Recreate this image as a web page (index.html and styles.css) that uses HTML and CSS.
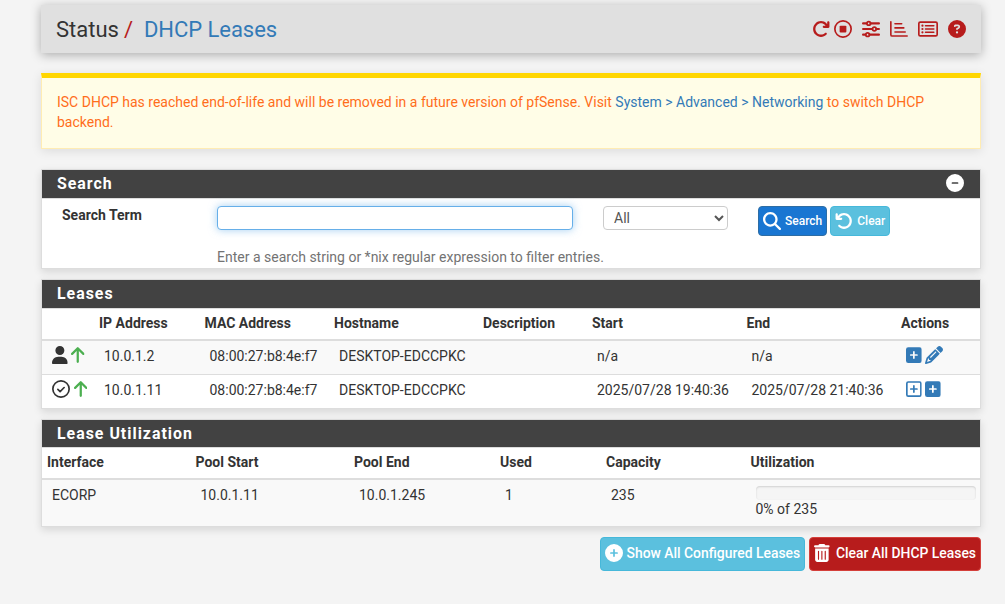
FILE: index.html
```html
<!DOCTYPE html>
<html lang="en">
<head>
<meta charset="utf-8">
<title>Status: DHCP Leases</title>
<link rel="stylesheet" href="styles.css">
</head>
<body>
<svg class="defs" aria-hidden="true">
  <symbol id="redo" viewBox="0 0 512 512"><path d="M386.3 160L336 160c-17.7 0-32 14.3-32 32s14.3 32 32 32l128 0c17.7 0 32-14.3 32-32l0-128c0-17.7-14.3-32-32-32s-32 14.3-32 32l0 51.2L414.4 97.6c-87.5-87.5-229.3-87.5-316.8 0s-87.5 229.3 0 316.8s229.3 87.5 316.8 0c12.5-12.5 12.5-32.8 0-45.3s-32.8-12.5-45.3 0c-62.5 62.5-163.8 62.5-226.3 0s-62.5-163.8 0-226.3s163.8-62.5 226.3 0L386.3 160z"/></symbol>
  <symbol id="stop" viewBox="0 0 512 512"><circle cx="256" cy="256" r="232" fill="none" stroke="currentColor" stroke-width="48"/><rect x="160" y="160" width="192" height="192" rx="28"/></symbol>
  <symbol id="sliders" viewBox="0 0 512 512"><g fill="none" stroke="currentColor" stroke-width="60" stroke-linecap="round"><path d="M30 96h100M242 96h240M30 256h260M402 256h80M30 416h70M212 416h270"/><g stroke-width="48"><circle cx="192" cy="96" r="52"/><circle cx="352" cy="256" r="52"/><circle cx="160" cy="416" r="52"/></g></g></symbol>
  <symbol id="chart" viewBox="0 0 512 512"><path d="M24 50v366q0 40 40 40h424M142 106h190M142 224h250M142 342h290" fill="none" stroke="currentColor" stroke-width="46" stroke-linecap="round" stroke-linejoin="round"/></symbol>
  <symbol id="list" viewBox="0 0 576 512"><rect x="24" y="56" width="528" height="400" rx="42" fill="none" stroke="currentColor" stroke-width="48"/><path d="M216 160h240M216 256h240M216 352h240" stroke="currentColor" stroke-width="44" stroke-linecap="round"/><circle cx="128" cy="160" r="32"/><circle cx="128" cy="256" r="32"/><circle cx="128" cy="352" r="32"/></symbol>
  <symbol id="help" viewBox="0 0 512 512"><path d="M256 512A256 256 0 1 0 256 0a256 256 0 1 0 0 512zM169.800 165.300c7.900-22.300 29.100-37.300 52.800-37.300l58.300 0c34.900 0 63.100 28.300 63.100 63.100c0 22.600-12.100 43.500-31.700 54.800L280 264.400c-.2 13-10.900 23.600-24 23.600c-13.300 0-24-10.700-24-24l0-13.500c0-8.600 4.600-16.500 12.100-20.800l44.300-25.400c4.700-2.700 7.600-7.700 7.600-13.100c0-8.400-6.800-15.100-15.100-15.100l-58.300 0c-3.400 0-6.400 2.100-7.500 5.300l-.4 1.200c-4.400 12.500-18.200 19-30.700 14.600s-19-18.200-14.600-30.700l.4-1.200zM224 352a32 32 0 1 1 64 0 32 32 0 1 1 -64 0z"/></symbol>
  <symbol id="minus" viewBox="0 0 512 512"><path fill-rule="evenodd" d="M256 512A256 256 0 1 0 256 0a256 256 0 1 0 0 512zM184 232h144a24 24 0 0 1 0 48H184a24 24 0 0 1 0-48z"/></symbol>
  <symbol id="plus-circle" viewBox="0 0 512 512"><path fill-rule="evenodd" d="M256 512A256 256 0 1 0 256 0a256 256 0 1 0 0 512zM232 344v-64h-64a24 24 0 0 1 0-48h64v-64a24 24 0 0 1 48 0v64h64a24 24 0 0 1 0 48h-64v64a24 24 0 0 1-48 0z"/></symbol>
  <symbol id="search" viewBox="0 0 512 512"><path d="M416 208c0 45.900-14.900 88.300-40 122.700L502.600 457.400c12.500 12.500 12.500 32.800 0 45.300s-32.800 12.500-45.300 0L330.700 376c-34.400 25.200-76.800 40-122.700 40C93.100 416 0 322.900 0 208S93.100 0 208 0S416 93.100 416 208zM208 352a144 144 0 1 0 0-288 144 144 0 1 0 0 288z"/></symbol>
  <symbol id="undo" viewBox="0 0 512 512"><path d="M125.700 160l50.300 0c17.700 0 32 14.300 32 32s-14.300 32-32 32L48 224c-17.700 0-32-14.300-32-32L16 64c0-17.700 14.300-32 32-32s32 14.300 32 32l0 51.200L97.600 97.600c87.500-87.500 229.300-87.500 316.800 0s87.500 229.300 0 316.800s-229.300 87.500-316.800 0c-12.500-12.500-12.500-32.800 0-45.300s32.800-12.500 45.300 0c62.500 62.500 163.800 62.500 226.300 0s62.500-163.800 0-226.300s-163.800-62.500-226.300 0L125.700 160z"/></symbol>
  <symbol id="user" viewBox="0 0 448 512"><path d="M224 256A128 128 0 1 0 224 0a128 128 0 1 0 0 256zm-45.700 48C79.800 304 0 383.800 0 482.300C0 498.700 13.300 512 29.700 512l388.600 0c16.400 0 29.700-13.300 29.700-29.700C448 383.800 368.200 304 269.700 304l-91.400 0z"/></symbol>
  <symbol id="check" viewBox="0 0 512 512"><g fill="none" stroke="currentColor" stroke-width="48" stroke-linecap="round" stroke-linejoin="round"><circle cx="256" cy="256" r="232"/><path d="M167 264l64 64 114-114"/></g></symbol>
  <symbol id="up" viewBox="0 0 384 512"><path d="M192 448V80M32 224L192 64l160 160" fill="none" stroke="currentColor" stroke-width="64" stroke-linecap="round" stroke-linejoin="round"/></symbol>
  <symbol id="plus-square" viewBox="0 0 448 512"><path fill-rule="evenodd" d="M64 32h320a64 64 0 0 1 64 64v320a64 64 0 0 1-64 64H64a64 64 0 0 1-64-64V96a64 64 0 0 1 64-64zM200 344v-64h-64a24 24 0 0 1 0-48h64v-64a24 24 0 0 1 48 0v64h64a24 24 0 0 1 0 48h-64v64a24 24 0 0 1-48 0z"/></symbol>
  <symbol id="plus-outline" viewBox="0 0 448 512"><g fill="none" stroke="currentColor" stroke-width="48" stroke-linecap="round"><rect x="24" y="56" width="400" height="400" rx="40"/><path d="M224 168v176M136 256h176"/></g></symbol>
  <symbol id="pencil" viewBox="0 0 512 512"><path d="M410.300 231l11.300-11.300-33.900-33.900-62.100-62.100L291.700 89.800l-11.300 11.300-22.600 22.600L58.600 322.900c-10.400 10.400-18 23.300-22.200 37.400L1 480.700c-2.500 8.400-.2 17.500 6.100 23.700s15.300 8.500 23.700 6.100l120.300-35.400c14.100-4.200 27-11.800 37.400-22.200L387.700 253.700 410.300 231zM160 399.400l-9.100 22.700c-4 3.100-8.500 5.400-13.300 6.900L59.400 452l23-78.100c1.400-4.900 3.800-9.400 6.900-13.300l22.700-9.100 0 32c0 8.800 7.200 16 16 16l32 0zM362.700 18.700L348.300 33.200 325.700 55.800 314.300 67.100l33.900 33.900 62.100 62.100 33.900 33.900 11.300-11.300 22.600-22.600 14.500-14.500c25-25 25-65.500 0-90.500L453.300 18.700c-25-25-65.500-25-90.500 0zm-47.400 168l-144 144c-6.200 6.200-16.400 6.200-22.600 0s-6.200-16.400 0-22.600l144-144c6.200-6.200 16.400-6.200 22.600 0s6.200 16.400 0 22.600z"/></symbol>
  <symbol id="trash" viewBox="0 0 448 512"><path fill-rule="evenodd" d="M135.200 17.700L128 32H32a32 32 0 0 0 0 64h384a32 32 0 0 0 0-64h-96l-7.200-14.300C307.400 6.800 296.300 0 284.200 0H163.800c-12.100 0-23.200 6.800-28.600 17.700zM32 128v320c0 35.300 28.700 64 64 64h256c35.300 0 64-28.700 64-64V128zM128 192a16 16 0 0 1 16 16v224a16 16 0 0 1-32 0V208a16 16 0 0 1 16-16zM224 192a16 16 0 0 1 16 16v224a16 16 0 0 1-32 0V208a16 16 0 0 1 16-16zM320 192a16 16 0 0 1 16 16v224a16 16 0 0 1-32 0V208a16 16 0 0 1 16-16z"/></symbol>
</svg>

<main class="container">
  <header class="page-header">
    <h1 class="crumbs">Status<span class="slash">/</span><a class="link">DHCP Leases</a></h1>
    <nav class="tools">
      <svg class="icon tight"><use href="#redo"/></svg>
      <svg class="icon"><use href="#stop"/></svg>
      <svg class="icon"><use href="#sliders"/></svg>
      <svg class="icon"><use href="#chart"/></svg>
      <svg class="icon wide"><use href="#list"/></svg>
      <svg class="icon"><use href="#help"/></svg>
    </nav>
  </header>

  <div class="alert">ISC DHCP has reached end-of-life and will be removed in a future version of pfSense. Visit <a class="link">System &gt; Advanced &gt; Networking</a> to switch DHCP backend.</div>

  <section class="panel search-panel">
    <h2 class="panel-title">Search<svg class="icon"><use href="#minus"/></svg></h2>
    <form class="search-form">
      <label class="search-label" for="term">Search Term</label>
      <div class="term-field">
        <input class="control" id="term" type="text">
        <span class="help">Enter a search string or *nix regular expression to filter entries.</span>
      </div>
      <select class="select"><option>All</option></select>
      <div class="search-actions">
        <button type="button" class="btn small primary"><svg class="icon"><use href="#search"/></svg>Search</button>
        <button type="button" class="btn small info"><svg class="icon"><use href="#undo"/></svg>Clear</button>
      </div>
    </form>
  </section>

  <section class="panel">
    <h2 class="panel-title">Leases</h2>
    <table class="table leases">
      <colgroup><col class="l1"><col class="l2"><col class="l3"><col class="l4"><col class="l5"><col class="l6"><col class="l7"><col></colgroup>
      <thead><tr><th></th><th>IP Address</th><th>MAC Address</th><th>Hostname</th><th>Description</th><th>Start</th><th>End</th><th>Actions</th></tr></thead>
      <tbody>
        <tr>
          <td><div class="icons"><svg class="icon narrow"><use href="#user"/></svg><svg class="icon arrow"><use href="#up"/></svg></div></td>
          <td>10.0.1.2</td><td>08:00:27:b8:4e:f7</td><td>DESKTOP-EDCCPKC</td><td></td><td>n/a</td><td>n/a</td>
          <td><div class="icons actions"><svg class="icon narrow"><use href="#plus-square"/></svg><svg class="icon"><use href="#pencil"/></svg></div></td>
        </tr>
        <tr>
          <td><div class="icons"><svg class="icon"><use href="#check"/></svg><svg class="icon arrow"><use href="#up"/></svg></div></td>
          <td>10.0.1.11</td><td>08:00:27:b8:4e:f7</td><td>DESKTOP-EDCCPKC</td><td></td><td>2025/07/28 19:40:36</td><td>2025/07/28 21:40:36</td>
          <td><div class="icons actions"><svg class="icon narrow"><use href="#plus-outline"/></svg><svg class="icon narrow"><use href="#plus-square"/></svg></div></td>
        </tr>
      </tbody>
    </table>
  </section>

  <section class="panel">
    <h2 class="panel-title short">Lease Utilization</h2>
    <table class="table utilization">
      <colgroup><col class="u1"><col class="u2"><col class="u3"><col class="u4"><col class="u5"><col></colgroup>
      <thead><tr><th>Interface</th><th>Pool Start</th><th>Pool End</th><th>Used</th><th>Capacity</th><th>Utilization</th></tr></thead>
      <tbody><tr><td>ECORP</td><td>10.0.1.11</td><td>10.0.1.245</td><td>1</td><td>235</td><td class="usage"><div class="progress"></div>0% of 235</td></tr></tbody>
    </table>
  </section>

  <div class="page-actions">
    <button type="button" class="btn info"><svg class="icon"><use href="#plus-circle"/></svg>Show All Configured Leases</button>
    <button type="button" class="btn danger"><svg class="icon narrow"><use href="#trash"/></svg>Clear All DHCP Leases</button>
  </div>
</main>
</body>
</html>
```

FILE: styles.css
```css
* { box-sizing: border-box; }
body {
  margin: 0;
  height: 604px;
  overflow: hidden;
  background: #f4f4f4;
  color: #333;
  font: 14px/20px Roboto, "Liberation Sans", sans-serif;
}
.defs { position: absolute; width: 0; height: 0; }
.container { width: 940px; margin-left: 41px; padding-top: 5px; }
.link { color: #337ab7; text-decoration: none; }
.icon { width: 18px; height: 18px; fill: currentColor; flex: none; display: block; }
.icon.narrow { width: 15.75px; }
.icon.wide { width: 20px; }
.icon.arrow { width: 13.5px; color: #4caf50; }

.page-header {
  display: flex;
  justify-content: space-between;
  height: 48px;
  padding: 0 15px;
  margin-bottom: 20px;
  background: #e0e0e0;
  box-shadow: 0 2px 10px rgba(0, 0, 0, .3);
}
.crumbs { margin: 0; font-size: 22px; line-height: 50px; font-weight: 400; }
.slash { margin: 0 11px 0 5px; color: #b71c1c; }
.crumbs .link { letter-spacing: -.05px; }
.tools { display: flex; gap: 10px; padding-top: 15px; color: #b71c1c; }
.tools .tight { margin-right: -6px; }

.alert {
  height: 76px;
  margin-bottom: 20px;
  padding: 14px 15px;
  border: 1px solid #ffecb3;
  border-top: 5px solid #ffd600;
  background: #fffde7;
  color: #ff6d1b;
  box-shadow: 0 2px 10px rgba(0, 0, 0, .1);
}

.panel {
  margin-bottom: 10px;
  border: 1px solid #ddd;
  background: #fff;
  box-shadow: 0 3px 8px rgba(0, 0, 0, .12);
}
.panel-title {
  display: flex;
  justify-content: space-between;
  height: 29px;
  margin: 0;
  padding: 4px 16px 0 15px;
  border-bottom: 1px solid #ddd;
  background: #424242;
  color: #fff;
  font-size: 15.9px;
  font-weight: 700;
  letter-spacing: 1px;
}
.panel-title.short { height: 28px; }
.search-panel { height: 100px; }
.search-form { display: flex; padding: 7px 20px 0; }
.search-label { width: 155px; line-height: 18px; font-weight: 700; }
.term-field { display: flex; flex-direction: column; gap: 17px; width: 356px; margin-right: 30px; white-space: nowrap; }
.control {
  width: 356px;
  height: 24px;
  border: 1px solid #66afe9;
  border-radius: 4px;
  box-shadow: 0 0 8px rgba(102, 175, 233, .6);
}
.help { color: #737373; }
.select {
  width: 125px;
  height: 24px;
  margin-right: 30px;
  padding: 0 0 0 6px;
  border: 1px solid #ccc;
  border-radius: 4px;
  background: #fff;
  color: #555;
  font: inherit;
}
.search-actions { display: flex; gap: 3px; }
.btn {
  display: flex;
  align-items: center;
  gap: 4px;
  height: 34px;
  padding: 0 4px 2px;
  border: 1px solid;
  border-radius: 4px;
  color: #fff;
  font: 500 13.9px/20px Roboto, "Liberation Sans", sans-serif;
  white-space: nowrap;
}
.btn.small { height: 30px; padding-bottom: 0; font-size: 12px; }
.primary { background: #1976d2; border-color: #2e6da4; }
.info { background: #5bc0de; border-color: #46b8da; }
.danger { background: #b71c1c; border-color: #d43f3a; }
.page-actions .danger { gap: 6px; }

.table { width: 100%; table-layout: fixed; border-collapse: separate; border-spacing: 0; }
.table th {
  height: 32px;
  padding: 4px 5px 6px;
  border-bottom: 2px solid #ddd;
  text-align: left;
  font-weight: 700;
}
.table td { height: 33px; padding: 5px 5px 0 10px; vertical-align: top; white-space: nowrap; }
.table tbody tr:nth-child(odd) { background: #f9f9f9; }
.table tbody tr + tr td { height: 34px; border-top: 1px solid #ddd; }
.leases .l1 { width: 52px; }
.leases .l2 { width: 105.5px; }
.leases .l3 { width: 129.5px; }
.leases .l4 { width: 149px; }
.leases .l5 { width: 109px; }
.leases .l6 { width: 154.5px; }
.leases .l7 { width: 154.5px; }
.utilization .u1 { width: 148.5px; }
.utilization .u2 { width: 158.5px; }
.utilization .u3 { width: 146px; }
.utilization .u4 { width: 106px; }
.utilization .u5 { width: 144.5px; }
.utilization td { height: 46px; }
.utilization .usage { padding-top: 6px; padding-right: 4px; }
.icons { display: flex; gap: 3.5px; }
.actions { color: #337ab7; }
.progress {
  height: 14px;
  margin-bottom: -1px;
  border-radius: 4px;
  background: #f5f5f5;
  box-shadow: inset 0 1px 2px rgba(0, 0, 0, .15);
}
.page-actions { display: flex; justify-content: flex-end; gap: 4px; }
```
